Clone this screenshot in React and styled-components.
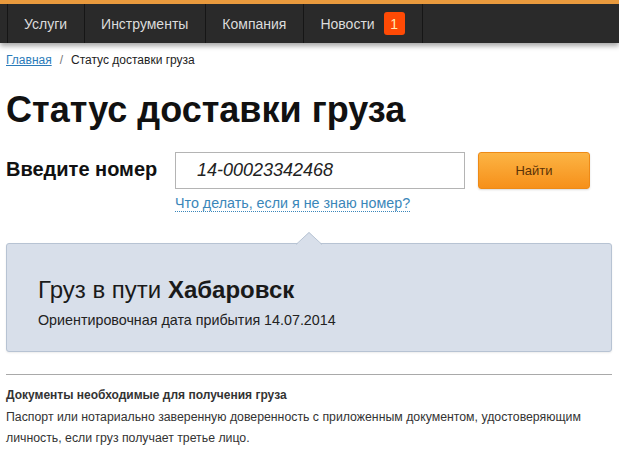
import React from 'react';
import styled, { createGlobalStyle } from 'styled-components';

const GlobalStyle = createGlobalStyle`
  body {
    margin: 0;
    background: #fff;
    font-family: "Liberation Sans", Arial, sans-serif;
    color: #222;
  }
`;

const TopBar = styled.nav`
  border-top: 4px solid #e99a3d;
  background: #2a2a2a;
  height: 39px;
  display: flex;
  padding-left: 7px;
  box-shadow: 0 3px 5px rgba(0, 0, 0, 0.35);
  position: relative;
`;

const NavItem = styled.a`
  display: flex;
  align-items: center;
  gap: 9px;
  padding: 0 17px 0 16px;
  border-left: 1px solid #161616;
  border-right: ${(p) => (p.$last ? '1px solid #161616' : 'none')};
  color: #dcdcdc;
  font-size: 14px;
  text-decoration: none;
`;

const Badge = styled.span`
  background: #ff4a05;
  color: #ffe9b0;
  font-size: 14px;
  border-radius: 3px;
  width: 21px;
  height: 23px;
  display: flex;
  align-items: center;
  justify-content: center;
`;

const Content = styled.main`
  padding: 0 7px 0 6px;
`;

const Crumbs = styled.div`
  margin-top: 10px;
  font-size: 12px;
  line-height: 14px;
  color: #222;
  display: flex;
  gap: 8px;
`;

const CrumbLink = styled.a`
  color: #2b7bb9;
  text-decoration: underline;
`;

const CrumbSep = styled.span`
  color: #777;
`;

const Title = styled.h1`
  margin: 23px 0 0;
  font-size: 36px;
  line-height: 40px;
  font-weight: bold;
  color: #111;
`;

const SearchRow = styled.div`
  margin-top: 22px;
  display: flex;
  align-items: center;
`;

const Label = styled.label`
  width: 169px;
  font-size: 20px;
  font-weight: bold;
  color: #111;
  padding-bottom: 2px;
`;

const Input = styled.input`
  box-sizing: border-box;
  width: 290px;
  height: 37px;
  border: 1px solid #b4b4b4;
  padding: 0 0 0 21px;
  font-family: "Liberation Sans", Arial, sans-serif;
  font-size: 18px;
  font-style: italic;
  color: #222;
  outline: none;
`;

const FindButton = styled.button`
  margin-left: 13px;
  width: 112px;
  height: 37px;
  border: 1px solid #ee8a16;
  border-radius: 3px;
  background: linear-gradient(#fcb444, #f6901a);
  color: #5a3207;
  font-family: "Liberation Sans", Arial, sans-serif;
  font-size: 13px;
  box-shadow: 0 1px 2px rgba(0, 0, 0, 0.15);
`;

const Hint = styled.a`
  display: inline-block;
  margin: 6px 0 0 169px;
  font-size: 14.3px;
  line-height: 16px;
  color: #3a86b9;
  text-decoration: none;
  border-bottom: 1px dotted #3a86b9;
`;

const Result = styled.section`
  position: relative;
  margin-top: 31px;
  background: #d8dfea;
  border: 1px solid #b7c3d3;
  border-radius: 3px;
  padding: 32px 31px 22px;
  box-shadow: 0 1px 2px rgba(0, 0, 0, 0.08);
`;

const Caret = styled.svg`
  position: absolute;
  top: -12px;
  left: 289px;
`;

const ResultTitle = styled.div`
  font-size: 24px;
  line-height: 28px;
  color: #1a1a1a;
`;

const City = styled.b`
  font-weight: bold;
`;

const ResultSub = styled.div`
  margin-top: 7px;
  font-size: 14.3px;
  line-height: 18px;
  color: #222;
`;

const Divider = styled.hr`
  margin: 22px 0 0;
  border: 0;
  border-top: 1px solid #a9a9a9;
`;

const DocsTitle = styled.h3`
  margin: 12px 0 0;
  font-size: 12px;
  line-height: 16px;
  font-weight: bold;
  color: #333;
`;

const DocsText = styled.p`
  margin: 4px 0 0;
  font-size: 12.3px;
  line-height: 21px;
  color: #333;
`;

export default function App() {
  return (
    <>
      <GlobalStyle />
      <TopBar>
        <NavItem>Услуги</NavItem>
        <NavItem>Инструменты</NavItem>
        <NavItem>Компания</NavItem>
        <NavItem $last>
          Новости <Badge>1</Badge>
        </NavItem>
      </TopBar>
      <Content>
        <Crumbs>
          <CrumbLink href="#">Главная</CrumbLink>
          <CrumbSep>/</CrumbSep>
          <span>Статус доставки груза</span>
        </Crumbs>
        <Title>Статус доставки груза</Title>
        <SearchRow>
          <Label>Введите номер</Label>
          <Input defaultValue="14-00023342468" />
          <FindButton>Найти</FindButton>
        </SearchRow>
        <Hint href="#">Что делать, если я не знаю номер?</Hint>
        <Result>
          <Caret width="26" height="13" viewBox="0 0 26 13">
            <path d="M0 13 L13 0 L26 13 Z" fill="#d8dfea" />
            <path d="M0 12.5 L13 0.5 L26 12.5" fill="none" stroke="#b7c3d3" strokeWidth="1" />
          </Caret>
          <ResultTitle>
            Груз в пути <City>Хабаровск</City>
          </ResultTitle>
          <ResultSub>Ориентировочная дата прибытия 14.07.2014</ResultSub>
        </Result>
        <Divider />
        <DocsTitle>Документы необходимые для получения груза</DocsTitle>
        <DocsText>
          Паспорт или нотариально заверенную доверенность с приложенным документом, удостоверяющим
          личность, если груз получает третье лицо.
        </DocsText>
      </Content>
    </>
  );
}
